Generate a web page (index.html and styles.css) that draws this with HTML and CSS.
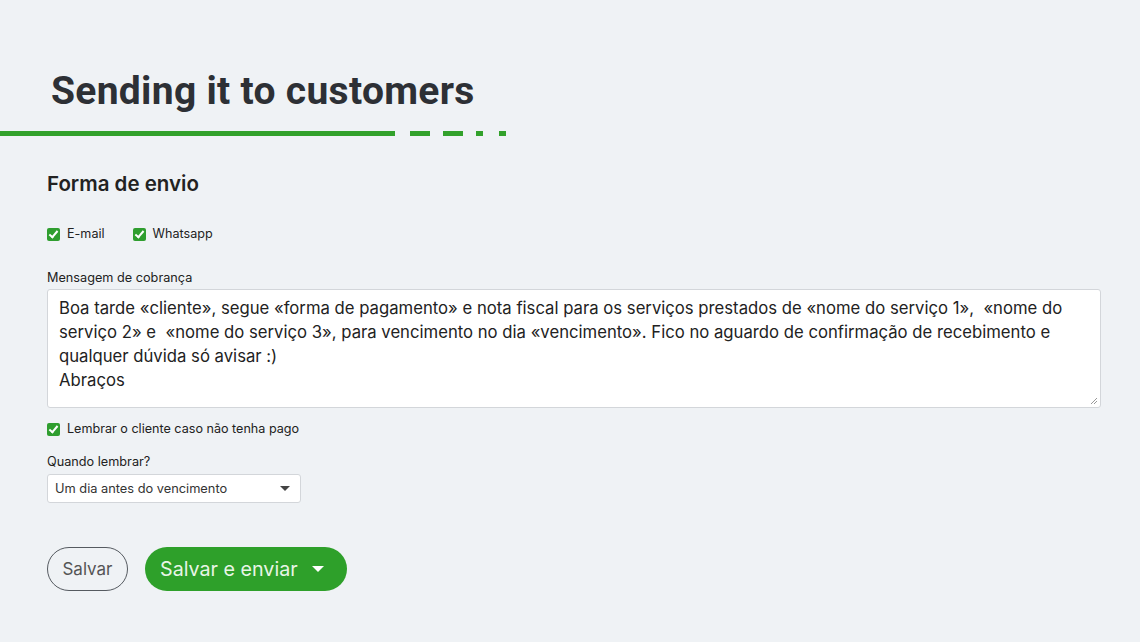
FILE: index.html
```html
<!DOCTYPE html>
<html>
<head>
    <title>Sending it to customers</title>
    <link rel="stylesheet" href="styles.css">
</head>
<body>
    <div class="header">
        <h1>Sending it to customers</h1>
        <div class="rule">
            <span class="rule-long"></span>
            <span class="rule-dash"></span>
            <span class="rule-dash"></span>
            <span class="rule-dot"></span>
            <span class="rule-dot"></span>
        </div>
    </div>

    <div class="form">
        <h2>Forma de envio</h2>

        <div class="channels">
            <label class="check"><span class="box"></span>E-mail</label>
            <label class="check"><span class="box"></span>Whatsapp</label>
        </div>

        <div class="field-label">Mensagem de cobrança</div>
        <div class="message">
            <p>Boa tarde «cliente», segue «forma de pagamento» e nota fiscal para os serviços prestados de «nome do serviço 1»,&nbsp; «nome do serviço 2» e&nbsp; «nome do serviço 3», para vencimento no dia «vencimento». Fico no aguardo de confirmação de recebimento e qualquer dúvida só avisar :)<br>Abraços</p>
            <svg class="grip" width="8" height="8" viewBox="0 0 8 8">
                <path d="M7 1 L1 7 M7 4 L4 7" stroke="#999" stroke-width="1"/>
            </svg>
        </div>

        <label class="check remind"><span class="box"></span>Lembrar o cliente caso não tenha pago</label>

        <div class="field-label">Quando lembrar?</div>
        <div class="select">
            <span>Um dia antes do vencimento</span>
            <span class="caret"></span>
        </div>

        <div class="actions">
            <button class="btn-outline">Salvar</button>
            <button class="btn-green">Salvar e enviar <span class="caret caret-white"></span></button>
        </div>
    </div>
</body>
</html>
```

FILE: styles.css
```css
body {
    margin: 0;
    padding: 0;
    background-color: #eff2f5;
    color: #2b2d31;
    font-family: Inter, sans-serif;
}

.header {
    padding-top: 65px;
}

.header h1 {
    margin: 0 0 0 51px;
    font-family: Roboto, sans-serif;
    font-weight: 700;
    font-size: 39px;
    line-height: 52px;
    color: #2d3035;
    letter-spacing: 0.3px;
}

.rule {
    display: flex;
    align-items: center;
    margin-top: 14px;
    height: 5px;
}

.rule span {
    height: 5px;
    background-color: #32a12b;
    margin-right: 13px;
}

.rule-long {
    width: 395px;
    margin-right: 15px !important;
}

.rule-dash {
    width: 20px;
}

.rule-dot {
    width: 7px;
    margin-right: 16px !important;
}

.form {
    padding: 36px 0 0 47px;
    width: 1054px;
}

.form h2 {
    margin: 0;
    font-size: 20.5px;
    font-weight: 600;
    color: #222;
    line-height: 24px;
}

.channels {
    display: flex;
    gap: 28px;
    margin-top: 30px;
}

.check {
    display: flex;
    align-items: center;
    gap: 7px;
    font-size: 12.6px;
    color: #222;
    line-height: 16px;
}

.box {
    display: inline-block;
    width: 13px;
    height: 13px;
    border-radius: 2px;
    background-color: #2f9e2f;
    position: relative;
}

.box::after {
    content: "";
    position: absolute;
    left: 4px;
    top: 1.5px;
    width: 3px;
    height: 7px;
    border: solid #fff;
    border-width: 0 2px 2px 0;
    transform: rotate(40deg);
}

.field-label {
    font-size: 12.7px;
    color: #222;
    line-height: 16px;
    margin-top: 28px;
}

.message {
    position: relative;
    margin-top: 3px;
    height: 119px;
    background-color: #fff;
    border: 1px solid #d3d6da;
    border-radius: 3px;
    box-sizing: border-box;
    padding: 6px 11px;
}

.message p {
    margin: 0;
    font-size: 16.7px;
    line-height: 24px;
    color: #222;
}

.grip {
    position: absolute;
    right: 2px;
    bottom: 2px;
}

.remind {
    margin-top: 13px;
}

.remind + .field-label {
    margin-top: 17px;
}

.select {
    display: flex;
    justify-content: space-between;
    align-items: center;
    width: 254px;
    height: 29px;
    box-sizing: border-box;
    margin-top: 4px;
    padding: 0 10px 0 7px;
    background-color: #fff;
    border: 1px solid #d3d6da;
    border-radius: 3px;
    font-size: 12.8px;
    color: #333;
}

.caret {
    width: 0;
    height: 0;
    border-left: 5px solid transparent;
    border-right: 5px solid transparent;
    border-top: 5px solid #444;
}

.actions {
    display: flex;
    gap: 17px;
    margin-top: 44px;
}

.actions button {
    font-family: Inter, sans-serif;
    height: 44px;
    border-radius: 22px;
    cursor: pointer;
}

.btn-outline {
    width: 81px;
    background: transparent;
    border: 1.5px solid #555a60;
    color: #555;
    font-size: 17px;
}

.btn-green {
    display: flex;
    align-items: center;
    gap: 14px;
    padding: 0 23px 0 15px;
    background-color: #2ea02a;
    border: none;
    color: #e8f5e6;
    font-size: 19.7px;
}

.caret-white {
    border-top-color: #fff;
    border-left-width: 6px;
    border-right-width: 6px;
    border-top-width: 6px;
}
```
